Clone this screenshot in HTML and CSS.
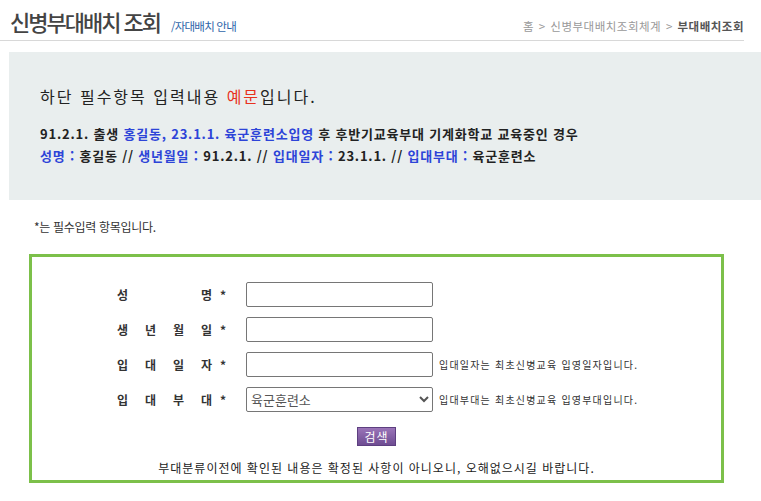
FILE: index.html
```html
<!DOCTYPE html>
<html lang="ko">
<head>
    <meta charset="UTF-8">
    <title>신병부대배치 조회</title>
    <link rel="stylesheet" href="styles.css">
</head>
<body>

<!-- 상단 제목 -->
<div class="header">
    <h2>신병부대배치 조회</h2>
    <span class="sub-title">/자대배치 안내</span>
    <div class="location">
        홈 <span class="sep">&gt;</span> 신병부대배치조회체계 <span class="sep">&gt;</span> <strong>부대배치조회</strong>
    </div>
</div>

<!-- 예문 안내 -->
<div class="sample-box">
    <p class="sample-title">하단 필수항목 입력내용 <span class="red">예문</span>입니다.</p>
    <p class="sample-line">91.2.1. 출생 <span class="blue">홍길동, 23.1.1. 육군훈련소입영</span> 후 후반기교육부대 기계화학교 교육중인 경우</p>
    <p class="sample-line"><span class="blue">성명 :</span> 홍길동 // <span class="blue">생년월일 :</span> 91.2.1. // <span class="blue">입대일자 :</span> 23.1.1. // <span class="blue">입대부대 :</span> 육군훈련소</p>
</div>

<p class="required-note">*는 필수입력 항목입니다.</p>

<!-- 조회 폼 -->
<div class="search-box">
    <div class="form-row">
        <span class="label">성 명</span>
        <span class="star">*</span>
        <input type="text" id="name">
    </div>
    <div class="form-row">
        <span class="label">생 년 월 일</span>
        <span class="star">*</span>
        <input type="text" id="birth">
    </div>
    <div class="form-row">
        <span class="label">입 대 일 자</span>
        <span class="star">*</span>
        <input type="text" id="enter-date">
        <span class="help">입대일자는 최초신병교육 입영일자입니다.</span>
    </div>
    <div class="form-row">
        <span class="label">입 대 부 대</span>
        <span class="star">*</span>
        <select id="unit">
            <option>육군훈련소</option>
            <option>제1신병교육대</option>
            <option>제2신병교육대</option>
        </select>
        <span class="help">입대부대는 최초신병교육 입영부대입니다.</span>
    </div>

    <div class="btn-area">
        <button type="button" class="btn-search">검색</button>
    </div>

    <p class="notice">부대분류이전에 확인된 내용은 확정된 사항이 아니오니, 오해없으시길 바랍니다.</p>
</div>

</body>
</html>
```

FILE: styles.css
```css
/* 기본 */
body {
    margin: 0;
    padding: 0;
    font-family: "Noto Sans CJK KR", "Liberation Sans", sans-serif;
    font-size: 12px;
    color: #333;
    background-color: #fff;
}

p {
    margin: 0;
}

/* 상단 제목 */
.header {
    display: flex;
    align-items: baseline;
    height: 40px;
    margin-right: 17px;
    padding-left: 10px;
    border-bottom: 1px solid #d8d8d8;
}

.header h2 {
    margin: 0;
    font-size: 22px;
    font-weight: 500;
    line-height: 42px;
    letter-spacing: -2px;
    color: #444;
}

.sub-title {
    margin-left: 11px;
    font-size: 11.5px;
    letter-spacing: -0.8px;
    color: #2f66aa;
}

.location {
    margin-left: auto;
    font-size: 11.5px;
    letter-spacing: 0.5px;
    color: #999;
}

.location .sep {
    margin: 0 1px;
}

.location strong {
    color: #555;
}

/* 예문 박스 */
.sample-box {
    margin: 11px 0 0 9px;
    height: 148px;
    padding: 33px 0 0 31px;
    box-sizing: border-box;
    background-color: #e9eeee;
    color: #222;
}

.sample-title {
    font-size: 16px;
    letter-spacing: 2px;
    line-height: 22px;
    margin-bottom: 16px;
}

.sample-line {
    font-size: 13px;
    font-weight: 700;
    line-height: 22px;
    letter-spacing: 0.8px;
}

.red {
    color: #e8321e;
}

.blue {
    color: #2d44d8;
}

.required-note {
    margin: 19px 0 0 34px;
    line-height: 16px;
    font-size: 12px;
    letter-spacing: -0.3px;
}

/* 조회 폼 */
.search-box {
    width: 689px;
    margin: 19px 0 0 29px;
    padding: 25px 0 3px 0;
    border: 3px solid #7cc04a;
}

.form-row {
    display: flex;
    align-items: center;
    height: 25px;
    margin-bottom: 10px;
    padding-left: 85px;
}

.label {
    width: 95px;
    font-weight: 700;
    font-size: 12px;
    text-align: justify;
    text-align-last: justify;
    color: #333;
}

.star {
    width: 26px;
    padding-left: 8px;
    font-weight: 700;
    color: #333;
}

.form-row input,
.form-row select {
    width: 187px;
    height: 25px;
    box-sizing: border-box;
    border: 1px solid #767676;
    border-radius: 2px;
    font-family: "Noto Sans CJK KR", sans-serif;
    font-size: 13px;
    color: #555;
    background: #fff;
}

.help {
    margin-left: 6px;
    font-size: 10px;
    letter-spacing: 1.2px;
    color: #333;
}

.btn-area {
    display: flex;
    justify-content: center;
    margin-top: 15px;
}

.btn-search {
    height: 19px;
    padding: 0 6px;
    border: 1px solid #5d3f80;
    background: linear-gradient(#9a74b8, #6e4c92);
    color: #fff;
    font-family: "Noto Sans CJK KR", sans-serif;
    font-size: 12px;
    line-height: 16px;
    letter-spacing: 1px;
    cursor: pointer;
}

.notice {
    margin-top: 13px;
    text-align: center;
    line-height: 18px;
    font-size: 12px;
    letter-spacing: 1px;
    color: #222;
}
```
